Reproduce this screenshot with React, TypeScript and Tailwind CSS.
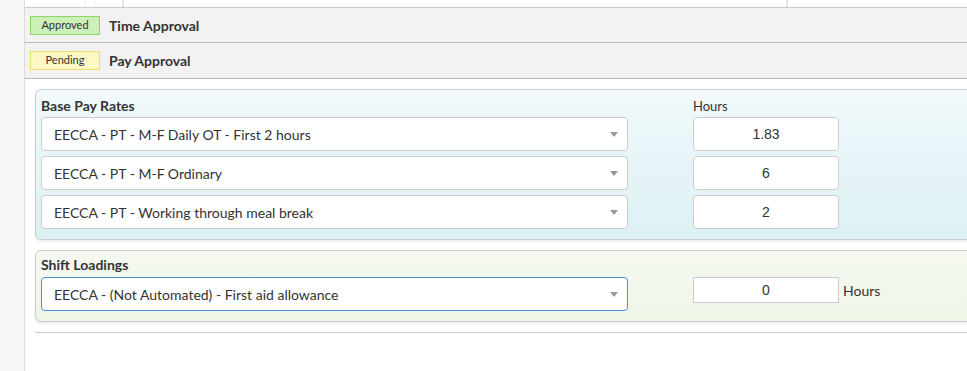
import React from "react";

const baseRates = [
  { name: "EECCA - PT - M-F Daily OT - First 2 hours", hours: "1.83" },
  { name: "EECCA - PT - M-F Ordinary", hours: "6" },
  { name: "EECCA - PT - Working through meal break", hours: "2" },
];

function Caret() {
  return (
    <svg width="8" height="5" viewBox="0 0 8 5" className="shrink-0">
      <path d="M0 0 L8 0 L4 5 Z" fill="#9a9a9a" />
    </svg>
  );
}

function SelectBox({ label, focused }: { label: string; focused?: boolean }) {
  return (
    <div
      className={
        focused
          ? "flex h-[34px] w-[587px] items-center justify-between rounded-[4px] border border-[#4a90d9] bg-white pl-[12px] pr-[9px] text-[14px] text-[#333]"
          : "flex h-[34px] w-[587px] items-center justify-between rounded-[4px] border border-[#cccccc] bg-white pl-[12px] pr-[9px] text-[14px] text-[#333]"
      }
    >
      <span>{label}</span>
      <Caret />
    </div>
  );
}

function Badge({ text, tone }: { text: string; tone: "green" | "yellow" }) {
  return (
    <span
      className={
        tone === "green"
          ? "flex h-[19px] w-[70px] items-center justify-center border border-[#90d46e] bg-[#cdefb8] text-[11px] text-[#333]"
          : "flex h-[19px] w-[70px] items-center justify-center border border-[#f1de6a] bg-[#fff7c4] text-[11px] text-[#333]"
      }
    >
      {text}
    </span>
  );
}

export default function App() {
  return (
    <div className="flex h-[371px] w-[967px] overflow-hidden bg-white font-['Lato',sans-serif] text-[#333]">
      <div className="w-[25px] shrink-0 border-r border-[#dddddd] bg-[#f7f7f7]" />
      <div className="flex w-[1100px] shrink-0 flex-col">
        {/* table strip above */}
        <div className="flex h-[8px] border-b border-[#cccccc]">
          <div className="w-[61px] border-r border-[#eeeeee]" />
          <div className="w-[9px] border-r border-[#eeeeee]" />
          <div className="w-[29px] border-r-2 border-[#e4e4e4]" />
          <div className="w-[664px] border-r-2 border-[#f0dede]" />
          <div className="flex-1" />
        </div>
        <div className="flex h-[35px] items-center gap-[9px] border-b border-[#b9b9bd] bg-[#f2f2f2] pl-[5px]">
          <Badge text="Approved" tone="green" />
          <span className="text-[14px] font-bold text-[#333]">Time Approval</span>
        </div>
        <div className="flex h-[36px] items-center gap-[9px] border-b border-[#b9b9bd] bg-[#f2f2f2] pl-[5px]">
          <Badge text="Pending" tone="yellow" />
          <span className="text-[14px] font-bold text-[#333]">Pay Approval</span>
        </div>

        <div className="flex flex-col pl-[10px] pt-[10px]">
          <div className="rounded-[6px] border border-[#cccccc] bg-gradient-to-b from-[#f1f9fb] to-[#dcf0f4] pb-[10px] pl-[5px] pt-[4px] shadow-[0_2px_3px_rgba(0,0,0,0.08)]">
            <div className="flex h-[22px] items-end">
              <span className="w-[652px] text-[14px] font-bold leading-[20px]">Base Pay Rates</span>
              <span className="text-[13px] leading-[20px]">Hours</span>
            </div>
            <div className="mt-[1px] flex flex-col gap-[5px]">
              {baseRates.map((r) => (
                <div key={r.name} className="flex items-center gap-[65px]">
                  <SelectBox label={r.name} />
                  <div className="flex h-[34px] w-[146px] items-center justify-center rounded-[4px] border border-[#cccccc] bg-white font-['Liberation_Sans',sans-serif] text-[14px] text-[#333]">
                    {r.hours}
                  </div>
                </div>
              ))}
            </div>
          </div>

          <div className="mt-[10px] rounded-[6px] border border-[#cccccc] bg-gradient-to-b from-[#f5f9f1] to-[#eef5e7] pb-[10px] pl-[5px] pt-[4px] shadow-[0_2px_3px_rgba(0,0,0,0.08)]">
            <div className="mb-[2px] text-[14px] font-bold leading-[20px]">Shift Loadings</div>
            <div className="flex items-start gap-[65px]">
              <SelectBox label="EECCA - (Not Automated) - First aid allowance" focused />
              <div className="flex items-center gap-[4px]">
                <div className="flex h-[26px] w-[146px] items-center justify-center border border-[#cccccc] bg-white font-['Liberation_Sans',sans-serif] text-[14px] text-[#333]">
                  0
                </div>
                <span className="text-[14px]">Hours</span>
              </div>
            </div>
          </div>

          <div className="mt-[10px] border-t border-[#cccccc]" />
        </div>
      </div>
    </div>
  );
}
